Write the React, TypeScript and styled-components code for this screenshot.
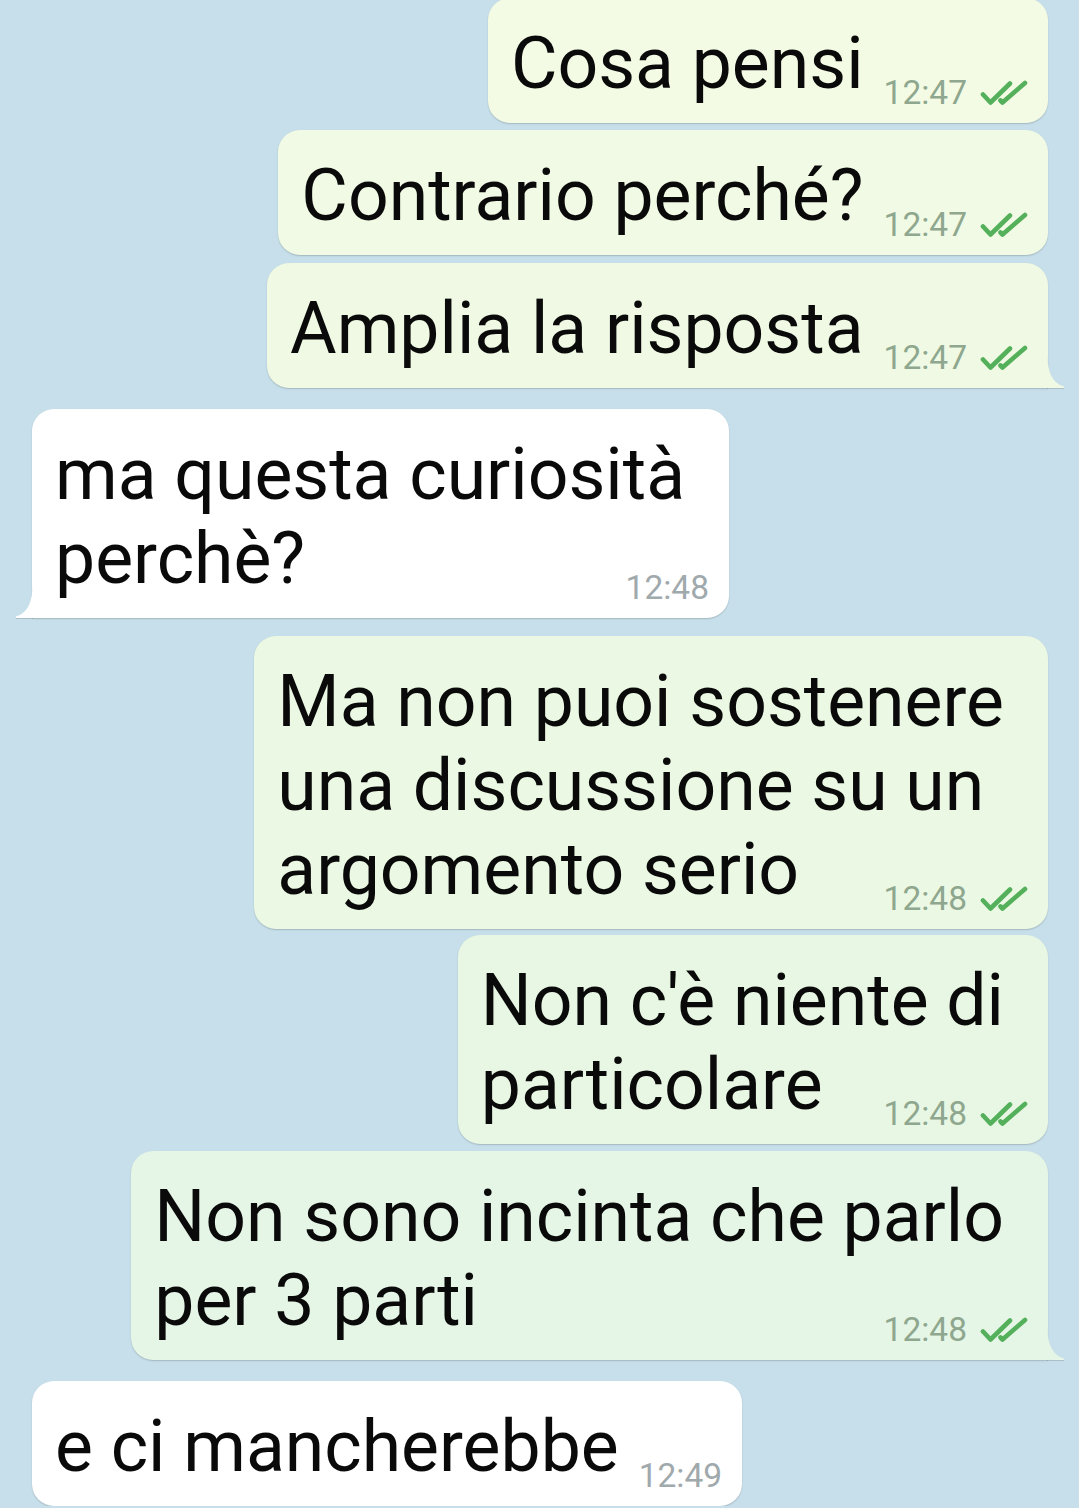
import React from 'react'
import styled, { createGlobalStyle } from 'styled-components'

const GlobalStyle = createGlobalStyle`
  html, body {
    margin: 0;
    padding: 0;
    background: #c7dfea;
    font-family: Roboto, "Noto Sans", sans-serif;
  }
`

type Side = 'in' | 'out'

interface Message {
  side: Side
  lines: string[]
  time: string
  tone: string
  gap: number
  tail?: boolean
}

const messages: Message[] = [
  { side: 'out', lines: ['Cosa pensi'], time: '12:47', tone: '#f3fbe5', gap: -2 },
  { side: 'out', lines: ['Contrario perché?'], time: '12:47', tone: '#f1fae4', gap: 7 },
  { side: 'out', lines: ['Amplia la risposta'], time: '12:47', tone: '#eff9e3', gap: 8, tail: true },
  { side: 'in', lines: ['ma questa curiosità', 'perchè?'], time: '12:48', tone: '#ffffff', gap: 21, tail: true },
  {
    side: 'out',
    lines: ['Ma non puoi sostenere', 'una discussione su un', 'argomento serio'],
    time: '12:48',
    tone: '#ebf8e3',
    gap: 18,
  },
  { side: 'out', lines: ["Non c'è niente di", 'particolare'], time: '12:48', tone: '#e8f7e4', gap: 6 },
  {
    side: 'out',
    lines: ['Non sono incinta che parlo', 'per 3 parti'],
    time: '12:48',
    tone: '#e5f5e6',
    gap: 7,
    tail: true,
  },
  { side: 'in', lines: ['e ci mancherebbe'], time: '12:49', tone: '#ffffff', gap: 21 },
]

const Chat = styled.div`
  display: flex;
  flex-direction: column;
  padding: 0 31px 0 32px;
`

const Row = styled.div<{ $side: Side; $gap: number }>`
  display: flex;
  justify-content: ${(p) => (p.$side === 'out' ? 'flex-end' : 'flex-start')};
  margin-top: ${(p) => p.$gap}px;
`

const Bubble = styled.div<{ $side: Side; $tone: string; $tail?: boolean }>`
  position: relative;
  background: ${(p) => p.$tone};
  border-radius: 22px;
  ${(p) =>
    p.$tail && (p.$side === 'out' ? 'border-bottom-right-radius: 0;' : 'border-bottom-left-radius: 0;')}
  box-shadow: 0 1px 1.5px rgba(0, 0, 0, 0.18);
  padding: 24px 20px 17px 23px;
  color: #0a0a0a;
`

const Line = styled.div`
  font-size: 71.5px;
  line-height: 84px;
  white-space: nowrap;
  padding-right: 24px;
`

const LastRow = styled.div`
  display: flex;
  align-items: flex-end;
  justify-content: space-between;

  ${Line} {
    padding-right: 20px;
  }
`

const Meta = styled.div<{ $side: Side }>`
  display: flex;
  align-items: center;
  gap: 13px;
  font-size: 33.5px;
  line-height: 34px;
  margin-bottom: -4px;
  color: ${(p) => (p.$side === 'out' ? '#8ea78e' : '#a0a9ac')};
  white-space: nowrap;
`

const Ticks = styled.svg`
  width: 48px;
  height: 26px;
  flex: none;
`

const Tail = styled.svg<{ $side: Side }>`
  position: absolute;
  bottom: 0;
  width: 18px;
  height: 34px;
  ${(p) => (p.$side === 'out' ? 'right: -17px;' : 'left: -17px; transform: scaleX(-1);')}
  filter: drop-shadow(0 1px 0.6px rgba(0, 0, 0, 0.14));
`

const DoubleTick = () => (
  <Ticks viewBox="0 0 48 26">
    <path
      d="M3 14.5 L10.5 22.5 L30 3.5 M20.5 20.5 L22.5 22.5 L45 3"
      fill="none"
      stroke="#55b05b"
      strokeWidth="4.6"
      strokeLinecap="round"
      strokeLinejoin="round"
    />
  </Ticks>
)

const App: React.FC = () => {
  return (
    <>
      <GlobalStyle />
      <Chat>
        {messages.map((m, i) => {
          const head = m.lines.slice(0, -1)
          const last = m.lines[m.lines.length - 1]
          return (
            <Row key={i} $side={m.side} $gap={m.gap}>
              <Bubble $side={m.side} $tone={m.tone} $tail={m.tail}>
                {head.map((l, j) => (
                  <Line key={j}>{l}</Line>
                ))}
                <LastRow>
                  <Line>{last}</Line>
                  <Meta $side={m.side}>
                    {m.time}
                    {m.side === 'out' && <DoubleTick />}
                  </Meta>
                </LastRow>
                {m.tail && (
                  <Tail $side={m.side} viewBox="0 0 18 34">
                    <path d="M0 0 C1 20 6 29 17 32.5 Q18 34 16 34 L0 34 Z" fill={m.tone} />
                  </Tail>
                )}
              </Bubble>
            </Row>
          )
        })}
      </Chat>
    </>
  )
}

export default App
